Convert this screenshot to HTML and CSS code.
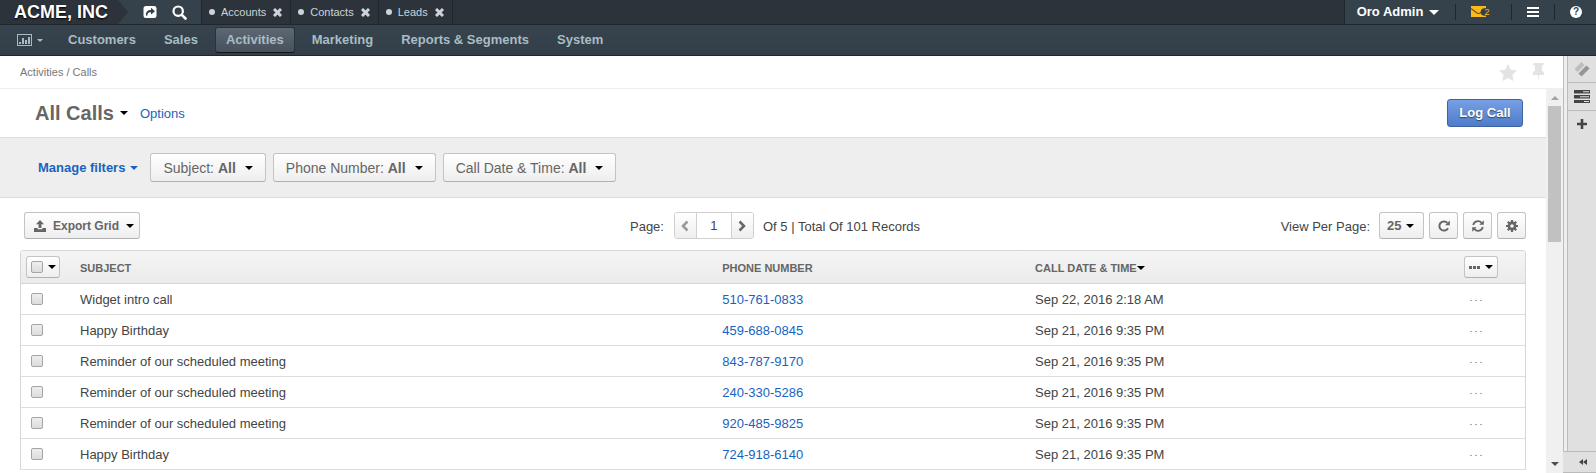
FILE: index.html
```html
<!DOCTYPE html>
<html lang="en">
<head>
<meta charset="utf-8">
<title>All Calls - Activities</title>
<link rel="stylesheet" href="styles.css">
</head>
<body>
<header class="topbar">
  <a class="brand" href="#">ACME, INC</a>
  <svg class="brand-arrow" viewBox="0 0 10 24" aria-hidden="true"><path d="M0 0L10 12L0 24Z"/></svg>
  <div class="quick">
    <button class="icon-btn" aria-label="Share"><svg width="14" height="14" viewBox="0 0 14 14"><rect x="0.500" y="1" width="13" height="12" rx="2.500" fill="#fff"/><path d="M3 10.500C2.500 7 4.500 5 8 5V2.800L12 6.200L8 9.500V7.300C5.500 7.200 4.300 8.200 4.300 10.800Z" fill="#33404a"/></svg></button>
    <button class="icon-btn" aria-label="Search"><svg width="15" height="15" viewBox="0 0 15 15" fill="none" stroke="#fff"><circle cx="6.200" cy="6.200" r="4.700" stroke-width="2.200"/><path d="M9.800 9.800L13.500 13.500" stroke-width="2.600" stroke-linecap="round"/></svg></button>
  </div>
  <nav class="tabs" aria-label="Pinned pages">
    <div class="tab"><i class="dot"></i><a href="#">Accounts</a><button class="close" aria-label="Close Accounts"><svg viewBox="0 0 9 9"><path d="M1 1L8 8M8 1L1 8"/></svg></button></div>
    <div class="tab"><i class="dot"></i><a href="#">Contacts</a><button class="close" aria-label="Close Contacts"><svg viewBox="0 0 9 9"><path d="M1 1L8 8M8 1L1 8"/></svg></button></div>
    <div class="tab"><i class="dot"></i><a href="#">Leads</a><button class="close" aria-label="Close Leads"><svg viewBox="0 0 9 9"><path d="M1 1L8 8M8 1L1 8"/></svg></button></div>
  </nav>
  <div class="user-area">
    <button class="user">Oro Admin <i class="caret"></i></button>
    <button class="mail" aria-label="Unread messages"><svg width="18" height="12" viewBox="0 0 18 12"><path d="M0 0H15V11H0Z" fill="#fbb81b"/><path d="M0 2.500L6 7Q7.500 8 9 7L15 2.500" fill="none" stroke="#6b5a2a" stroke-width="1.200"/><circle cx="13.500" cy="6" r="3.800" fill="#33404a"/></svg><span>2</span></button>
    <button class="menu" aria-label="Menu"><svg width="12" height="11" viewBox="0 0 12 11" fill="#fff"><path d="M0 0H12V2H0ZM0 4H12V6H0ZM0 8H12V10H0Z"/></svg></button>
    <button class="help" aria-label="Help">?</button>
  </div>
</header>
<nav class="mainnav" aria-label="Main">
  <button class="dash" aria-label="Dashboards"><svg width="15" height="12" viewBox="0 0 15 12"><rect x="0.500" y="0.500" width="14" height="11" fill="none" stroke="#a9bcc4"/><path d="M2 8H4V10H2ZM5 4H7V10H5ZM8 6H10V10H8ZM11 3H13V10H11Z" fill="#a9bcc4"/></svg><i class="caret"></i></button>
  <a href="#">Customers</a>
  <a href="#">Sales</a>
  <a href="#" class="active">Activities</a>
  <a href="#">Marketing</a>
  <a href="#">Reports &amp; Segments</a>
  <a href="#">System</a>
</nav>
<div class="body">
  <main class="page">
    <div class="crumbs">
      <span>Activities&nbsp;/&nbsp;Calls</span>
      <div class="marks">
        <button class="icon-btn" aria-label="Favorite"><svg width="18" height="17" viewBox="0 0 18 17" fill="#e3e3e3"><path d="M9 0L11.700 5.700L18 6.500L13.400 10.800L14.600 17L9 14L3.400 17L4.600 10.800L0 6.500L6.300 5.700Z"/></svg></button>
        <button class="icon-btn" aria-label="Pin"><svg width="13" height="18" viewBox="0 0 13 18" fill="#e3e3e3"><path d="M1.500 0H11.500V2.500H10V7.500Q12.500 9 12.500 12H7.200L6.500 18L5.800 12H0.500Q0.500 9 3 7.500V2.500H1.500Z"/></svg></button>
      </div>
    </div>
    <div class="scroller">
      <div class="content">
        <div class="title-row">
          <h1>All Calls</h1><button class="plain" aria-label="Choose view"><i class="caret"></i></button>
          <a class="options" href="#">Options</a>
          <button class="primary">Log Call</button>
        </div>
        <div class="filters">
          <button class="manage">Manage filters <i class="caret"></i></button>
          <button class="btn filter"><span>Subject: <b>All</b></span><i class="caret"></i></button>
          <button class="btn filter"><span>Phone Number: <b>All</b></span><i class="caret"></i></button>
          <button class="btn filter"><span>Call Date &amp; Time: <b>All</b></span><i class="caret"></i></button>
        </div>
        <div class="toolbar">
          <div class="tool-left">
            <button class="btn export"><svg width="12" height="12" viewBox="0 0 12 12" fill="#666"><path d="M6 0L10 4.200H7.400V8H4.600V4.200H2ZM0 8H3.600V9.200H8.400V8H12V12H0Z"/></svg>Export Grid<i class="caret"></i></button>
          </div>
          <div class="pager">
            <label for="page">Page:</label>
            <div class="pager-group">
              <button class="prev" aria-label="Previous page"><svg width="8" height="12" viewBox="0 0 8 12"><path d="M6.500 1.500L2 6L6.500 10.500"/></svg></button>
              <input id="page" type="text" value="1">
              <button class="next" aria-label="Next page"><svg width="8" height="12" viewBox="0 0 8 12"><path d="M1.500 1.500L6 6L1.500 10.500"/></svg></button>
            </div>
            <span>Of 5 | Total Of 101 Records</span>
          </div>
          <div class="tool-right">
            <label for="size">View Per Page:</label>
            <span class="select"><select id="size"><option>25</option><option>50</option><option>100</option></select><i class="caret"></i></span>
            <button class="btn square" aria-label="Refresh"><svg width="12" height="12" viewBox="0 0 12 12"><path d="M10 8.200A4.600 4.600 0 1 1 9.300 2.800" fill="none" stroke="#666" stroke-width="2"/><path d="M11.800 0.500V5.200H7.100Z" fill="#666"/></svg></button>
            <button class="btn square" aria-label="Reset"><svg width="12" height="12" viewBox="0 0 12 12"><path d="M1.200 5A4.900 4.900 0 0 1 9.600 2.800M10.800 7A4.900 4.900 0 0 1 2.400 9.200" fill="none" stroke="#666" stroke-width="1.800"/><path d="M11.800 0.300V4.800H7.300ZM0.200 11.700V7.200H4.700Z" fill="#666"/></svg></button>
            <button class="btn square" aria-label="Grid settings"><svg width="12" height="12" viewBox="0 0 12 12"><circle cx="6" cy="6" r="3.100" fill="none" stroke="#666" stroke-width="2.600"/><path d="M6 0V2.500M6 9.500V12M0 6H2.500M9.500 6H12M1.800 1.800L3.500 3.500M8.500 8.500L10.200 10.200M10.200 1.800L8.500 3.500M3.500 8.500L1.800 10.200" stroke="#666" stroke-width="2.200"/></svg></button>
          </div>
        </div>
        <div class="grid-wrap">
        <table class="grid">
          <colgroup><col class="c-check"><col class="c-subject"><col class="c-phone"><col><col class="c-actions"></colgroup>
          <thead>
            <tr>
              <th><span class="btn mini"><input type="checkbox" aria-label="Select all"><i class="caret"></i></span></th>
              <th>SUBJECT</th>
              <th>PHONE NUMBER</th>
              <th><span class="sorted">CALL DATE &amp; TIME<i class="caret"></i></span></th>
              <th class="mass"><button class="btn mini" aria-label="Mass actions"><svg width="11" height="3" viewBox="0 0 11 3" fill="#666"><path d="M0 0H3V3H0ZM4 0H7V3H4ZM8 0H11V3H8Z"/></svg><i class="caret"></i></button></th>
            </tr>
          </thead>
          <tbody>
            <tr><td><input type="checkbox" aria-label="Select row"></td><td>Widget intro call</td><td><a href="#">510-761-0833</a></td><td>Sep 22, 2016 2:18 AM</td><td><button class="dots" aria-label="Row actions"><i></i><i></i><i></i></button></td></tr>
            <tr><td><input type="checkbox" aria-label="Select row"></td><td>Happy Birthday</td><td><a href="#">459-688-0845</a></td><td>Sep 21, 2016 9:35 PM</td><td><button class="dots" aria-label="Row actions"><i></i><i></i><i></i></button></td></tr>
            <tr><td><input type="checkbox" aria-label="Select row"></td><td>Reminder of our scheduled meeting</td><td><a href="#">843-787-9170</a></td><td>Sep 21, 2016 9:35 PM</td><td><button class="dots" aria-label="Row actions"><i></i><i></i><i></i></button></td></tr>
            <tr><td><input type="checkbox" aria-label="Select row"></td><td>Reminder of our scheduled meeting</td><td><a href="#">240-330-5286</a></td><td>Sep 21, 2016 9:35 PM</td><td><button class="dots" aria-label="Row actions"><i></i><i></i><i></i></button></td></tr>
            <tr><td><input type="checkbox" aria-label="Select row"></td><td>Reminder of our scheduled meeting</td><td><a href="#">920-485-9825</a></td><td>Sep 21, 2016 9:35 PM</td><td><button class="dots" aria-label="Row actions"><i></i><i></i><i></i></button></td></tr>
            <tr><td><input type="checkbox" aria-label="Select row"></td><td>Happy Birthday</td><td><a href="#">724-918-6140</a></td><td>Sep 21, 2016 9:35 PM</td><td><button class="dots" aria-label="Row actions"><i></i><i></i><i></i></button></td></tr>
          </tbody>
        </table>
        </div>
      </div>
      <div class="scrollbar" aria-hidden="true">
        <svg width="8" height="4" viewBox="0 0 8 4" fill="#a3a3a3"><path d="M4 0L8 4H0Z"/></svg>
        <div class="thumb"></div>
        <svg class="down" width="8" height="4" viewBox="0 0 8 4" fill="#505050"><path d="M0 0H8L4 4Z"/></svg>
      </div>
    </div>
  </main>
  <aside class="side">
    <div class="side-main">
      <button aria-label="Widgets"><svg width="16" height="16" viewBox="0 0 16 16" stroke-width="4.500"><path d="M2 9.500L9 2.500" stroke="#bdbdbd"/><path d="M6 14L14 6" stroke="#969696"/></svg></button>
      <button aria-label="Tasks"><svg width="16" height="13" viewBox="0 0 16 13"><path d="M0 0H16V3.500H0ZM0 5H16V8.500H0ZM0 10H16V13H0Z" fill="#444"/><path d="M9 1.300H15V2.300H9ZM6 6.300H15V7.300H6ZM10 11H15V12H10Z" fill="#ddd"/></svg></button>
      <button aria-label="Add widget"><svg width="10" height="10" viewBox="0 0 10 10" fill="#444"><path d="M3.700 0H6.300V3.700H10V6.300H6.300V10H3.700V6.300H0V3.700H3.700Z"/></svg></button>
    </div>
    <button class="collapse" aria-label="Expand sidebar"><svg width="8" height="6" viewBox="0 0 8 6" fill="#444"><path d="M4 0V6L0 3ZM8 0V6L4 3Z"/></svg></button>
  </aside>
</div>
</body>
</html>
```

FILE: styles.css
```css
* { box-sizing: border-box; }
body {
  margin: 0;
  height: 100vh;
  display: flex;
  flex-direction: column;
  overflow: hidden;
  background: #fff;
  color: #444;
  font: 13px/20px "Liberation Sans", Arial, sans-serif;
}
button {
  margin: 0;
  padding: 0;
  border: 0;
  background: none;
  color: inherit;
  font: inherit;
  display: inline-flex;
  align-items: center;
  justify-content: center;
  white-space: nowrap;
}
a { color: #1863c1; text-decoration: none; }
svg { display: block; flex: none; }
.caret {
  display: inline-block;
  flex: none;
  border: 4px solid transparent;
  border-top-color: #000;
  border-bottom: 0;
}

/* Top bar */
.topbar {
  flex: none;
  display: flex;
  height: 25px;
  background: #2c333b;
  border-bottom: 1px solid #1f272e;
}
.brand {
  width: 118px;
  padding-left: 14px;
  color: #fff;
  font-size: 18px;
  font-weight: bold;
  line-height: 24px;
  white-space: nowrap;
  text-shadow: 0 1px 2px #000;
}
.brand-arrow { width: 10px; height: 24px; background: #35424b; fill: #2c333b; }
.quick {
  display: flex;
  gap: 15px;
  width: 74px;
  padding-left: 15px;
  background: #35424b;
  border-right: 1px solid #1f272e;
}
.tabs { display: flex; flex: 1; }
.tab {
  display: flex;
  align-items: center;
  gap: 6px;
  padding: 0 8px 0 7px;
  border-right: 1px solid #1f272e;
  font-size: 11px;
}
.tab a { color: #cdd3d7; }
.dot { width: 6px; height: 6px; border-radius: 50%; background: #cdd3d7; }
.close { margin-left: 1px; }
.close svg { width: 9px; height: 9px; stroke: #cdd3d7; stroke-width: 3; }
.user-area {
  display: flex;
  align-items: center;
  width: 252px;
  background: #35424b;
  border-left: 1px solid #1f272e;
  color: #fff;
}
.user-area button { height: 16px; border-right: 1px solid #1f272e; }
.user { width: 111px; padding-right: 4px; gap: 6px; font-weight: bold; }
.user .caret { border-width: 5px 5px 0; border-top-color: #fff; }
.mail { width: 56px; padding-right: 6px; font-size: 9px; color: #fbb81b; }
.mail span { margin-left: -5px; }
.menu { width: 43px; }
.user-area .help {
  width: 12px;
  height: 12px;
  margin-left: 15px;
  border: 0;
  border-radius: 50%;
  background: #fff;
  color: #35424b;
  font-size: 10px;
  font-weight: bold;
}

/* Main navigation */
.mainnav {
  flex: none;
  display: flex;
  align-items: center;
  gap: 6px;
  height: 31px;
  padding: 0 17px;
  background: linear-gradient(#37444d, #333e48);
  border-bottom: 1px solid #1f272e;
}
.mainnav a {
  height: 26px;
  padding: 0 10px;
  border: 1px solid transparent;
  border-radius: 3px;
  color: #a9bcc4;
  font-weight: bold;
  line-height: 24px;
  white-space: nowrap;
}
.mainnav .active {
  background: linear-gradient(#5d6874, #47505b);
  border-color: #2a323a;
  border-bottom-color: #11161a;
}
.dash { width: 34px; gap: 5px; justify-content: flex-start; }
.dash .caret { border-width: 3px 3px 0; border-top-color: #a9bcc4; }

/* Page */
.body { flex: 1; display: flex; min-height: 0; }
.page { flex: 1; min-width: 0; display: flex; flex-direction: column; }
.crumbs {
  flex: none;
  display: flex;
  justify-content: space-between;
  height: 33px;
  padding: 0 18px 0 20px;
  border-bottom: 1px solid #eee;
  color: #777;
  font-size: 11px;
  line-height: 32px;
  word-spacing: normal;
}
.marks { display: flex; gap: 15px; }
.scroller { flex: 1; min-height: 0; display: flex; }
.content { flex: 1; min-width: 0; overflow: hidden; }
.title-row {
  display: flex;
  align-items: center;
  height: 49px;
  padding: 0 23px 0 35px;
  border-bottom: 1px solid #ddd;
}
h1 { margin: 0 6px 0 0; color: #666; font-size: 20px; line-height: 24px; }
.options { margin-left: 12px; padding-top: 2px; }
.primary {
  width: 76px;
  height: 28px;
  margin-left: auto;
  border: 1px solid #3e63a0;
  border-radius: 3px;
  background: linear-gradient(#779fe4, #4e7cc9);
  color: #fff;
  font-weight: bold;
  text-shadow: 0 1px 1px #345;
}
.filters {
  display: flex;
  align-items: center;
  gap: 7px;
  height: 60px;
  padding-left: 38px;
  background: #eee;
  border-bottom: 1px solid #ddd;
}
.manage { gap: 5px; margin-right: 5px; color: #1863c1; font-weight: bold; }
.manage .caret { border-top-color: #1863c1; }
.btn, .select {
  border: 1px solid #c4c4c4;
  border-bottom-color: #b0b0b0;
  border-radius: 3px;
  background: linear-gradient(#fff, #eee);
  color: #666;
}
.filter { height: 29px; padding: 0 12px; gap: 9px; font-size: 14px; }
.toolbar { display: flex; align-items: center; padding: 14px 20px 11px 24px; }
.tool-left, .tool-right { flex: 1; display: flex; align-items: center; }
.tool-right { justify-content: flex-end; gap: 5px; }
.tool-right label { margin-right: 4px; }
.export { height: 27px; padding: 0 5px 0 9px; gap: 7px; font-size: 12px; font-weight: bold; }
.pager { display: flex; align-items: center; gap: 9px; }
.pager label { margin-right: 1px; }
.pager-group {
  display: flex;
  height: 27px;
  border: 1px solid #d0d0d0;
  border-radius: 3px;
  overflow: hidden;
}
.pager-group button { width: 21px; background: linear-gradient(#fff, #eee); }
.pager-group path { fill: none; stroke: #666; stroke-width: 2.500; }
.pager-group .prev path { stroke: #999; }
.pager-group input {
  width: 36px;
  padding: 0;
  border: solid #d0d0d0;
  border-width: 0 1px;
  background: #fff;
  color: #444;
  font: inherit;
  text-align: center;
}
.pager > label, .pager > span, .tool-right > label { padding-top: 2px; }
.square { width: 29px; height: 27px; }
.select { display: grid; align-items: center; width: 45px; height: 27px; }
.select > * { grid-area: 1 / 1; }
.select select {
  appearance: none;
  height: 25px;
  padding: 0 0 0 7px;
  border: 0;
  background: none;
  color: #666;
  font: bold 13px "Liberation Sans", Arial, sans-serif;
}
.select .caret { justify-self: end; margin-right: 9px; pointer-events: none; }

/* Grid */
.grid-wrap {
  margin: 0 20px;
  border: 1px solid #d6d6d6;
  border-bottom: 0;
  border-radius: 4px 4px 0 0;
  overflow: hidden;
}
.grid { width: 100%; border-collapse: separate; border-spacing: 0; table-layout: fixed; }
.c-check { width: 59px; }
.c-subject { width: 42.7%; }
.c-phone { width: 20.8%; }
.c-actions { width: 73px; }
.grid th {
  height: 33px;
  padding: 2px 0 0;
  background: linear-gradient(#f5f5f5, #ebebeb);
  border-bottom: 1px solid #d6d6d6;
  color: #666;
  font-size: 11px;
  text-align: left;
}
.grid td { height: 31px; padding: 2px 0 0; border-bottom: 1px solid #ddd; white-space: nowrap; }
.grid td:first-child { padding: 0 0 0 10px; }
.grid th:first-child { padding: 0 0 0 5px; }
.grid td:last-child { padding-left: 18px; }
.grid th:last-child { padding: 0 0 0 12px; }
.sorted { display: flex; align-items: center; }
.mini { display: flex; align-items: center; width: 34px; height: 22px; gap: 5px; padding: 0 4px; }
input[type="checkbox"] {
  appearance: none;
  display: block;
  flex: none;
  width: 12px;
  height: 12px;
  margin: 0;
  border: 1px solid #a5a5a5;
  border-radius: 2px;
  background: linear-gradient(#eee, #dcdcdc);
}
.dots { display: flex; gap: 3px; height: 20px; }
.dots i { width: 2px; height: 1px; background: #aaa; }

/* Scrollbar */
.scrollbar {
  width: 17px;
  display: flex;
  flex-direction: column;
  align-items: center;
  padding: 7px 0;
  background: #f0f0f0;
}
.thumb { width: 13px; height: 136px; margin-top: 6px; background: #c1c1c1; }
.down { margin-top: auto; }

/* Sidebar */
.side { width: 33px; display: flex; flex-direction: column; background: #e0e0e0; }
.side-main {
  flex: 1;
  display: flex;
  flex-direction: column;
  padding-left: 4px;
  border-left: 1px solid #bbb;
  box-shadow: inset 3px 0 #eee, inset 4px 0 #bbb;
}
.side-main button { height: 28px; border-bottom: 1px solid #bbb; }
.side-main button:first-child { height: 27px; }
.side-main button:last-child { height: 26px; border: 0; }
.collapse {
  height: 22px;
  padding-left: 6px;
  border-top: 1px solid #bbb;
  border-bottom: 1px solid #bbb;
}
```
